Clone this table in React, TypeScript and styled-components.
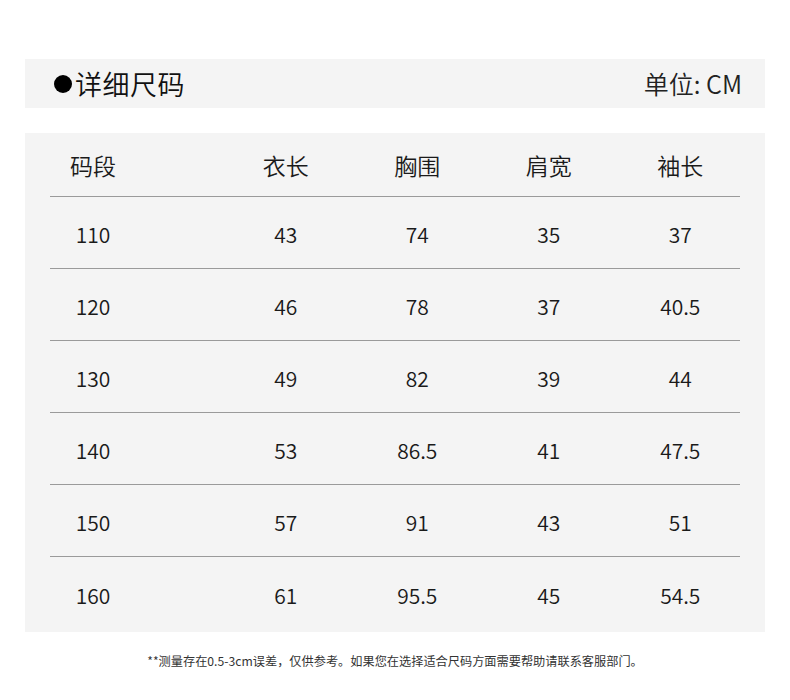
import React from 'react';
import styled, { createGlobalStyle } from 'styled-components';

const GlobalStyle = createGlobalStyle`
  html, body {
    margin: 0;
    padding: 0;
    background: #ffffff;
  }
  body {
    font-family: "Noto Sans CJK SC", "Noto Sans", sans-serif;
    color: #1a1a1a;
  }
`;

const Page = styled.div`
  width: 790px;
  height: 700px;
  padding: 59px 25px 0;
  box-sizing: border-box;
  display: flex;
  flex-direction: column;
`;

const TitleBar = styled.div`
  height: 49px;
  background: #f4f4f4;
  display: flex;
  align-items: center;
  justify-content: space-between;
  padding: 0 23px 0 29px;
`;

const Title = styled.h1`
  margin: 0;
  display: flex;
  align-items: center;
  font-size: 27px;
  font-weight: 350;
  line-height: 1;
  letter-spacing: 0.5px;
  color: #111;
`;

const Dot = styled.span`
  width: 18px;
  height: 18px;
  border-radius: 50%;
  background: #000;
  margin-right: 3px;
`;

const Unit = styled.span`
  font-size: 25px;
  font-weight: 350;
  line-height: 1;
  color: #222;
`;

const Panel = styled.div`
  margin-top: 25px;
  height: 499px;
  background: #f4f4f4;
  padding: 0 25px;
  box-sizing: border-box;
`;

const Row = styled.div<{ $head?: boolean; $last?: boolean }>`
  display: grid;
  grid-template-columns: 170px repeat(4, 131.5px);
  align-items: center;
  height: ${(p) => (p.$head ? '64px' : '72px')};
  border-bottom: ${(p) => (p.$last ? 'none' : '1px solid #9a9a9a')};
  box-sizing: border-box;
`;

const Cell = styled.div<{ $first?: boolean; $head?: boolean }>`
  text-align: center;
  padding-right: ${(p) => (p.$first ? '84px' : '0')};
  font-size: ${(p) => (p.$head ? '23px' : '21px')};
  font-weight: 350;
  padding-top: ${(p) => (p.$head ? '2px' : '4px')};
  color: #1a1a1a;
  line-height: 1;
`;

const Note = styled.p`
  margin: 20px 0 0;
  text-align: center;
  font-size: 12.2px;
  color: #333;
`;

const heads = ['码段', '衣长', '胸围', '肩宽', '袖长'];

const rows = [
  ['110', '43', '74', '35', '37'],
  ['120', '46', '78', '37', '40.5'],
  ['130', '49', '82', '39', '44'],
  ['140', '53', '86.5', '41', '47.5'],
  ['150', '57', '91', '43', '51'],
  ['160', '61', '95.5', '45', '54.5'],
];

export default function App() {
  return (
    <>
      <GlobalStyle />
      <Page>
        <TitleBar>
          <Title>
            <Dot />
            详细尺码
          </Title>
          <Unit>单位: CM</Unit>
        </TitleBar>

        <Panel>
          <Row $head>
            {heads.map((h, i) => (
              <Cell key={h} $head $first={i === 0}>
                {h}
              </Cell>
            ))}
          </Row>
          {rows.map((r, ri) => (
            <Row key={r[0]} $last={ri === rows.length - 1}>
              {r.map((v, i) => (
                <Cell key={i} $first={i === 0}>
                  {v}
                </Cell>
              ))}
            </Row>
          ))}
        </Panel>

        <Note>**测量存在0.5-3cm误差，仅供参考。如果您在选择适合尺码方面需要帮助请联系客服部门。</Note>
      </Page>
    </>
  );
}
